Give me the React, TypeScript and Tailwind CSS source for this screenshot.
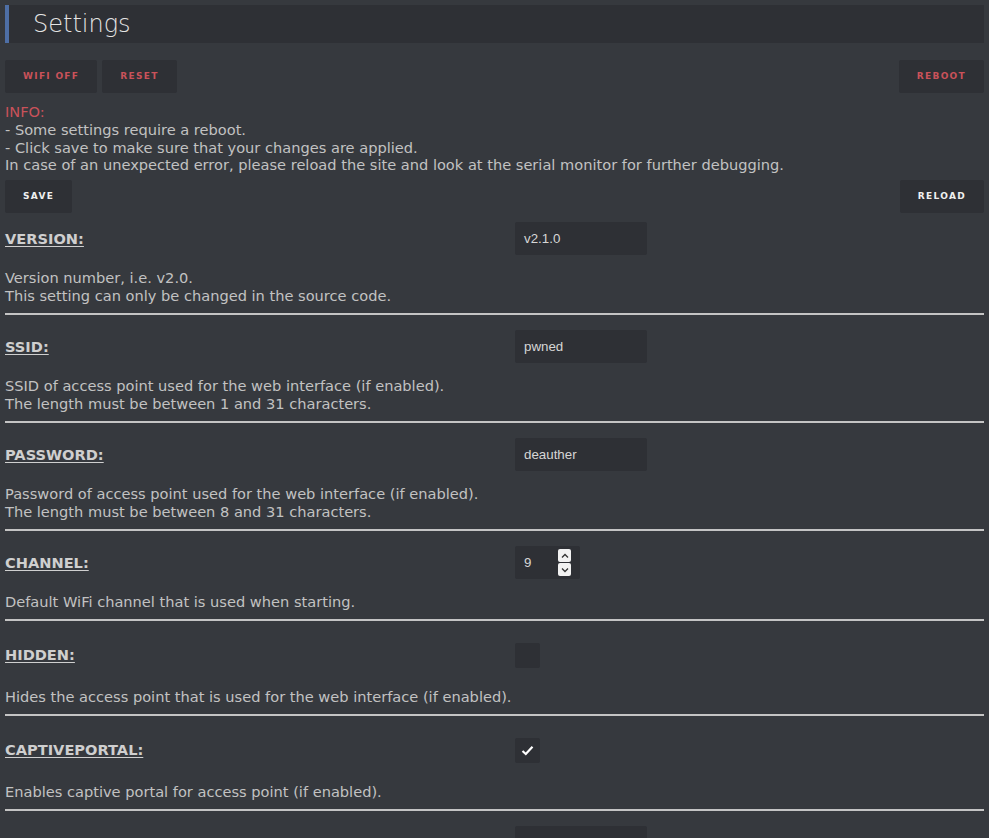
import React from "react";

const font = { fontFamily: '"DejaVu Sans", "Noto Sans", sans-serif' };

function Btn({ label, red }: { label: string; red?: boolean }) {
  return (
    <button
      className={
        "h-[33px] px-[18px] bg-[#2e3035] rounded-[2px] text-[9px] font-bold tracking-[1.3px] uppercase " +
        (red ? "text-[#c9525a]" : "text-[#f0f0f0]")
      }
    >
      {label}
    </button>
  );
}

function TextInput({ value }: { value: string }) {
  return (
    <div
      className="w-[132px] h-[33px] bg-[#2e3035] rounded-[2px] flex items-center pl-[9px] text-[13.333px] text-[#d6d6d6]"
      style={{ fontFamily: '"Liberation Sans", Arial, sans-serif' }}
    >
      {value}
    </div>
  );
}

function NumberInput({ value }: { value: string }) {
  return (
    <div
      className="w-[65px] h-[33px] bg-[#2e3035] rounded-[2px] flex items-center pl-[9px] pr-[9px] justify-between text-[13.333px] text-[#d6d6d6]"
      style={{ fontFamily: '"Liberation Sans", Arial, sans-serif' }}
    >
      <span>{value}</span>
      <div className="flex flex-col gap-[1px]">
        <div className="w-[13px] h-[13px] bg-[#f2f2f2] rounded-[2px] flex items-center justify-center">
          <svg width="8" height="6" viewBox="0 0 8 6">
            <path d="M1 4.5 L4 1.5 L7 4.5" stroke="#333" strokeWidth="1.3" fill="none" />
          </svg>
        </div>
        <div className="w-[13px] h-[13px] bg-[#f2f2f2] rounded-[2px] flex items-center justify-center">
          <svg width="8" height="6" viewBox="0 0 8 6">
            <path d="M1 1.5 L4 4.5 L7 1.5" stroke="#333" strokeWidth="1.3" fill="none" />
          </svg>
        </div>
      </div>
    </div>
  );
}

function Checkbox({ checked }: { checked?: boolean }) {
  return (
    <div className="w-[25px] h-[25px] bg-[#2e3035] rounded-[2px] flex items-center justify-center">
      {checked && (
        <svg width="13" height="11" viewBox="0 0 13 11">
          <path d="M1.5 6 L4.8 9 L11.5 1.8" stroke="#ffffff" strokeWidth="2.2" fill="none" />
        </svg>
      )}
    </div>
  );
}

type Row = {
  label: string;
  control: React.ReactNode;
  desc: string[];
  check?: boolean;
};

function Section({ row, first }: { row: Row; first?: boolean }) {
  return (
    <div>
      <div
        className={
          "flex items-center " + (first ? "mt-[9px] " : "mt-[15px] ") + (row.check ? "h-[38px]" : "h-[33px]")
        }
      >
        <div className="w-[510px] font-bold underline underline-offset-[2px] text-[#cfcfcf]">{row.label}</div>
        {row.control}
      </div>
      <div className="mt-[14px] leading-[18px]">
        {row.desc.map((d, i) => (
          <div key={i}>{d}</div>
        ))}
      </div>
      <div className="mt-[8px] h-[2px] bg-[#c4c4c4]" />
    </div>
  );
}

export default function App() {
  const rows: Row[] = [
    {
      label: "VERSION:",
      control: <TextInput value="v2.1.0" />,
      desc: ["Version number, i.e. v2.0.", "This setting can only be changed in the source code."],
    },
    {
      label: "SSID:",
      control: <TextInput value="pwned" />,
      desc: [
        "SSID of access point used for the web interface (if enabled).",
        "The length must be between 1 and 31 characters.",
      ],
    },
    {
      label: "PASSWORD:",
      control: <TextInput value="deauther" />,
      desc: [
        "Password of access point used for the web interface (if enabled).",
        "The length must be between 8 and 31 characters.",
      ],
    },
    {
      label: "CHANNEL:",
      control: <NumberInput value="9" />,
      desc: ["Default WiFi channel that is used when starting."],
    },
    {
      label: "HIDDEN:",
      control: <Checkbox />,
      desc: ["Hides the access point that is used for the web interface (if enabled)."],
      check: true,
    },
    {
      label: "CAPTIVEPORTAL:",
      control: <Checkbox checked />,
      desc: ["Enables captive portal for access point (if enabled)."],
      check: true,
    },
    {
      label: "LANG:",
      control: <TextInput value="en" />,
      desc: ["Default language for the web interface."],
    },
  ];

  return (
    <div className="min-h-screen bg-[#36393e] text-[#c2c2c2] text-[14.6px] px-[5px] pt-[5px]" style={font}>
      <div className="h-[38px] bg-[#2e3035] border-l-[4px] border-[#4e6fa6] flex items-center pl-[24px]">
        <span className="text-[24px] font-extralight text-[#e4e4e4]">Settings</span>
      </div>

      <div className="mt-[17px] flex justify-between">
        <div className="flex gap-[5px]">
          <Btn label="WiFi off" red />
          <Btn label="Reset" red />
        </div>
        <Btn label="Reboot" red />
      </div>

      <div className="mt-[10px] leading-[17.8px]">
        <div className="text-[#c9525a]">INFO:</div>
        <div>- Some settings require a reboot.</div>
        <div>- Click save to make sure that your changes are applied.</div>
        <div>In case of an unexpected error, please reload the site and look at the serial monitor for further debugging.</div>
      </div>

      <div className="mt-[6px] flex justify-between">
        <Btn label="Save" />
        <Btn label="Reload" />
      </div>

      {rows.map((r, i) => (
        <Section key={i} row={r} first={i === 0} />
      ))}
    </div>
  );
}
